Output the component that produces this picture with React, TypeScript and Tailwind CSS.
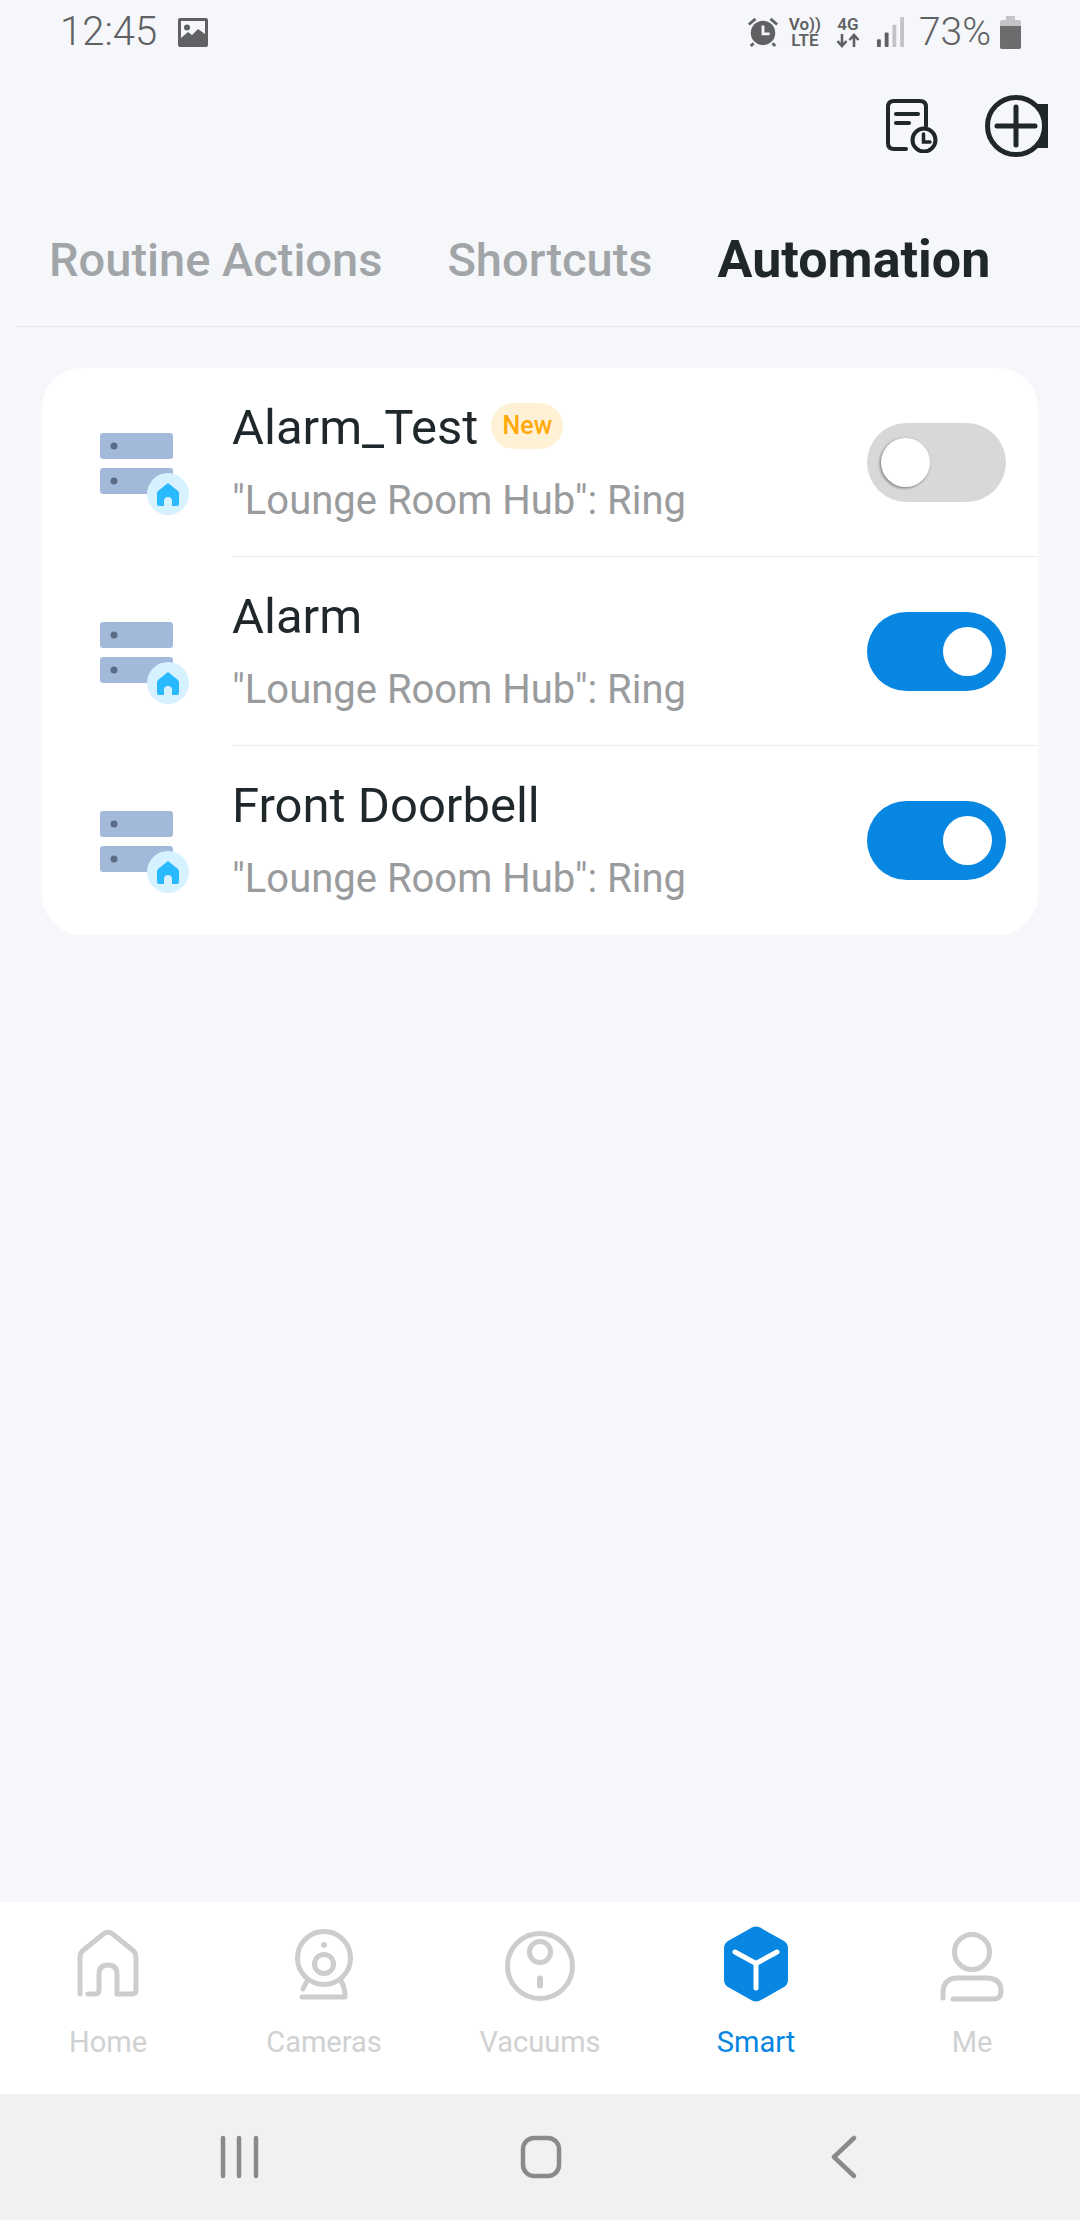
const font = { fontFamily: "Roboto, sans-serif" };

const rows = [
  { name: "Alarm_Test", isNew: true, on: false },
  { name: "Alarm", isNew: false, on: true },
  { name: "Front Doorbell", isNew: false, on: true },
];

const HubIcon = () => (
  <svg width="106" height="104" viewBox="0 0 106 104" className="block">
    <rect x="17" y="22" width="73" height="26" rx="3" fill="#a3b9da" />
    <rect x="17" y="57" width="73" height="26" rx="3" fill="#a3b9da" />
    <circle cx="31" cy="35" r="3.5" fill="#5c6b85" />
    <circle cx="31" cy="70" r="3.5" fill="#5c6b85" />
    <circle cx="85" cy="83" r="21" fill="#d6f1ff" />
    <path
      d="M85 72 L95 80 Q96 81 96 82.5 V93 Q96 95 94 95 H89 V90 Q89 86 85 86 Q81 86 81 90 V95 H76 Q74 95 74 93 V82.5 Q74 81 75 80 Z"
      fill="#29b9ff"
    />
  </svg>
);

const Toggle = ({ on }: { on: boolean }) => (
  <div
    className={`flex h-[79px] w-[139px] items-center rounded-full px-[14px] ${
      on ? "justify-end bg-[#0786e2]" : "justify-start bg-[#d8d8d8]"
    }`}
  >
    <div
      className={`h-[49px] w-[49px] rounded-full bg-white ${
        on ? "" : "shadow-[-1px_1px_3px_rgba(0,0,0,0.45)]"
      }`}
    />
  </div>
);

const HomeIcon = () => (
  <svg width="64" height="72" viewBox="0 0 64 72" fill="none" stroke="#cbcdce" strokeWidth="5" strokeLinecap="round" strokeLinejoin="round">
    <path d="M4 64 V27 Q4 23 7 20.5 L28 3.5 Q32 1 36 3.5 L57 20.5 Q60 23 60 27 V60 Q60 64 56 64 H41 V44 Q41 35 32 35 Q23 35 23 44 V60 Q23 64 19 64 H12" />
  </svg>
);

const CameraIcon = () => (
  <svg width="64" height="76" viewBox="0 0 64 76" fill="none" stroke="#cbcdce" strokeWidth="5" strokeLinecap="round" strokeLinejoin="round">
    <circle cx="32" cy="32" r="26.5" />
    <circle cx="32" cy="38" r="9.5" />
    <circle cx="32" cy="19" r="3" fill="#cbcdce" stroke="none" />
    <path d="M14.5 56 L11 63" />
    <path d="M49 55 Q53 61 53 71 H10" />
  </svg>
);

const VacuumIcon = () => (
  <svg width="72" height="72" viewBox="0 0 72 72" fill="none" stroke="#cbcdce" strokeWidth="5" strokeLinecap="round">
    <circle cx="36" cy="36" r="32.5" />
    <circle cx="36" cy="22" r="10.5" />
    <path d="M36 48.5 V55.5" strokeWidth="6" />
  </svg>
);

const SmartIcon = () => (
  <svg width="66" height="76" viewBox="0 0 66 76">
    <path
      d="M29 1.5 Q33 -0.5 37 1.5 L61 15 Q65 17.5 65 22 V54 Q65 58.5 61 61 L37 74.5 Q33 76.5 29 74.5 L5 61 Q1 58.5 1 54 V22 Q1 17.5 5 15 Z"
      fill="#0786e2"
    />
    <path d="M12 26 L33 37.5 L54 26 M33 37.5 V62" fill="none" stroke="#fff" strokeWidth="5" strokeLinecap="round" strokeLinejoin="round" />
  </svg>
);

const MeIcon = () => (
  <svg width="64" height="72" viewBox="0 0 64 72" fill="none" stroke="#cbcdce" strokeWidth="5" strokeLinecap="round">
    <circle cx="32" cy="22" r="17.5" />
    <path d="M3 68 V63 Q3 48 18 48 H46 Q61 48 61 61 Q61 69 54 69 H13" />
  </svg>
);

const tabs = [
  { label: "Home", icon: <HomeIcon /> },
  { label: "Cameras", icon: <CameraIcon /> },
  { label: "Vacuums", icon: <VacuumIcon /> },
  { label: "Smart", icon: <SmartIcon />, active: true },
  { label: "Me", icon: <MeIcon /> },
];

const StatusRight = () => (
  <div className="flex items-center text-[#5f6163]">
    <svg width="32" height="32" viewBox="0 0 34 34" className="mr-[10px]">
      <circle cx="17" cy="18" r="13" fill="#5f6163" />
      <path d="M17 10 V19 H24" fill="none" stroke="#f5f7fb" strokeWidth="3" />
      <path d="M2 9 L9 3 M32 9 L25 3 M7 29 L4 32 M27 29 L30 32" stroke="#5f6163" strokeWidth="3" />
    </svg>
    <div className="mr-[15px] flex w-[32px] flex-col items-center text-[17px] leading-[16px] font-semibold">
      <span>Vo))</span>
      <span>LTE</span>
    </div>
    <div className="mr-[17px] flex w-[24px] flex-col items-center text-[17px] leading-[17px] font-semibold">
      <span>4G</span>
      <svg width="24" height="15" viewBox="0 0 24 15" fill="none" stroke="#5f6163" strokeWidth="2.6">
        <path d="M6 1 V12 M1.5 8 L6 13 L10.5 8 M18 14 V3 M13.5 7 L18 2 L22.5 7" />
      </svg>
    </div>
    <svg width="27" height="30" viewBox="0 0 28 31" className="mr-[15px]">
      <rect x="0" y="23" width="4" height="8" rx="1" fill="#5f6163" />
      <rect x="8" y="16" width="4" height="15" rx="1" fill="#5f6163" />
      <rect x="16" y="8" width="4" height="23" rx="1" fill="#c2c4c5" />
      <rect x="24" y="0" width="4" height="31" rx="1" fill="#c2c4c5" />
    </svg>
    <span className="mr-[9px] text-[39px] leading-none font-light">73%</span>
    <svg width="21" height="33" viewBox="0 0 21 33">
      <rect x="6" y="0" width="9" height="4" fill="#c2c4c5" />
      <rect x="0" y="4" width="21" height="29" rx="2" fill="#c2c4c5" />
      <path d="M0 10 H21 V31 Q21 33 19 33 H2 Q0 33 0 31 Z" fill="#6c6d6e" />
    </svg>
  </div>
);

export default function App() {
  return (
    <div className="flex h-[2220px] w-[1080px] flex-col bg-[#f5f7fb]" style={font}>
      <div className="flex h-[64px] shrink-0 items-center justify-between pr-[59px] pl-[60px]">
        <div className="flex items-center text-[#5f6163]">
          <span className="text-[40px] leading-none font-light">12:45</span>
          <svg width="30" height="29" viewBox="0 0 30 29" className="ml-[21px]">
            <rect width="30" height="29" rx="2" fill="#5f6163" />
            <rect x="3" y="3" width="24" height="20" fill="#f5f7fb" />
            <circle cx="9" cy="9.5" r="3" fill="#5f6163" />
            <path d="M3 20 L10 14 L14 17 L20 11 L27 16 V26 H3 Z" fill="#5f6163" />
          </svg>
        </div>
        <StatusRight />
      </div>

      <div className="flex h-[98px] shrink-0 items-start justify-end pt-[31px] pr-[32px]">
        <svg width="52" height="54" viewBox="0 0 52 54" fill="none" stroke="#1f272b" strokeWidth="4" strokeLinecap="round" className="mt-[4px] mr-[47px]">
          <path d="M20 50 H8 Q2 50 2 44 V8 Q2 2 8 2 H34 Q40 2 40 8 V27" />
          <path d="M10 15 H32 M10 24 H23" />
          <circle cx="38" cy="41" r="11.5" />
          <path d="M37.5 35 V43 H44" strokeWidth="3.5" />
        </svg>
        <svg width="63" height="62" viewBox="0 0 63 62" fill="none">
          <rect x="46" y="9" width="17" height="44" fill="#1f272b" />
          <circle cx="31" cy="31" r="28.5" fill="#f5f7fb" stroke="#1f272b" strokeWidth="5" />
          <path d="M12 31 H50 M31 12 V50" stroke="#1f272b" strokeWidth="5" strokeLinecap="round" />
        </svg>
      </div>

      <div className="ml-[16px] flex h-[165px] shrink-0 items-start border-b border-[#e6e8e6] pt-[71px] pl-[33px]">
        {/* tabs row */}
        <span className="text-[47px] leading-[54px] font-medium text-[#a2a5a8]">Routine Actions</span>
        <span className="ml-[65px] text-[47px] leading-[54px] font-medium text-[#a2a5a8]">Shortcuts</span>
        <span className="ml-[65px] text-[52px] leading-[54px] font-bold text-[#1f272b]">Automation</span>
      </div>

      <div className="mx-[42px] mt-[41px] shrink-0 overflow-hidden rounded-[40px] bg-white">
        {rows.map((row, i) => (
          <div key={row.name} className="flex h-[189px] items-center">
            <div className="ml-[41px] w-[106px] shrink-0">
              <HubIcon />
            </div>
            <div className={`ml-[43px] flex h-full flex-1 items-center pr-[32px] ${i < 2 ? "border-b border-[#ecedee]" : ""}`}>
              <div className="flex-1 pb-[1px]">
                <div className="flex items-center">
                  <span className="text-[49px] leading-[54px] text-[#1f272b]">{row.name}</span>
                  {row.isNew && (
                    <span className="mb-[4px] ml-[13px] flex h-[46px] w-[72px] items-center justify-center rounded-full bg-[#fff1d6] text-[25px] font-medium text-[#ffa90a]">
                      New
                    </span>
                  )}
                </div>
                <div className="mt-[24px] text-[40px] leading-[44px] text-[#999b9d]">"Lounge Room Hub": Ring</div>
              </div>
              <Toggle on={row.on} />
            </div>
          </div>
        ))}
      </div>

      <div className="flex-1" />

      <div className="flex h-[192px] shrink-0 bg-white">
        {tabs.map((tab) => (
          <div key={tab.label} className="flex w-[216px] flex-col items-center">
            <div className="flex h-[100px] items-end">{tab.icon}</div>
            <span className={`mt-[23px] text-[29px] leading-[34px] ${tab.active ? "text-[#0786e2]" : "text-[#cfd1d2]"}`}>
              {tab.label}
            </span>
          </div>
        ))}
      </div>

      <div className="flex h-[126px] shrink-0 items-center justify-center bg-[#f1f1f1]">
        <svg width="640" height="44" viewBox="0 0 640 44" fill="none" stroke="#8a8a8a" strokeLinecap="round" strokeLinejoin="round" strokeWidth="4.5">
          <path d="M3 3 V41 M19 3 V41 M36 3 V41" />
          <rect x="303" y="3" width="36" height="38" rx="11" />
          <path d="M634 3 L614 22 L634 41" />
        </svg>
      </div>
    </div>
  );
}
